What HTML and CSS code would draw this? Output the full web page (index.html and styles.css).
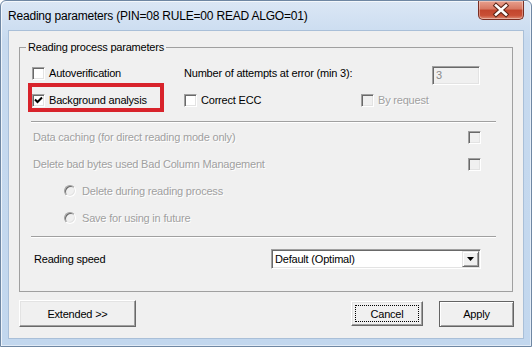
FILE: index.html
```html
<!DOCTYPE html>
<html>
<head>
<meta charset="utf-8">
<link rel="stylesheet" href="styles.css">
</head>
<body>
<div class="window">
  <div class="titlebar">
    <span class="title">Reading parameters (PIN=08 RULE=00 READ ALGO=01)</span>
    <span class="close">
      <svg width="44" height="18" viewBox="0 0 44 18">
        <path d="M17 4.5 L27 13.5 M27 4.5 L17 13.5" stroke="#5b2417" stroke-width="4.6" stroke-linecap="square" fill="none"/>
        <path d="M17 4.5 L27 13.5 M27 4.5 L17 13.5" stroke="#ffffff" stroke-width="2.6" stroke-linecap="square" fill="none"/>
      </svg>
    </span>
  </div>
  <div class="client">
    <fieldset class="group">
      <legend>Reading process parameters</legend>
      <div class="top">
        <label class="chk"><span class="box"></span><span>Autoverification</span></label>
        <div class="attempts"><span class="lbl">Number of attempts at error (min 3):</span><span class="num">3</span></div>
        <label class="chk hl"><span class="box"><svg width="9" height="9" viewBox="0 0 9 9"><path d="M1 3.5 L3.5 6 L8 1.5" stroke="#000" stroke-width="2" fill="none"/></svg></span><span>Background analysis</span></label>
        <label class="chk"><span class="box"></span><span>Correct ECC</span></label>
        <label class="chk dis"><span class="box"></span><span class="dtext">By request</span></label>
      </div>
      <div class="sep"></div>
      <div class="lower">
        <div class="row"><span class="dtext">Data caching (for direct reading mode only)</span><span class="box dbox"></span></div>
        <div class="row"><span class="dtext">Delete bad bytes used Bad Column Management</span><span class="box dbox"></span></div>
        <div class="row radio"><span class="rb"></span><span class="dtext">Delete during reading process</span></div>
        <div class="row radio"><span class="rb"></span><span class="dtext">Save for using in future</span></div>
      </div>
      <div class="sep sep2"></div>
      <div class="speed">
        <span>Reading speed</span>
        <div class="combo">
          <span class="val">Default (Optimal)</span>
          <span class="drop"><svg width="7" height="4" viewBox="0 0 7 4"><path d="M0 0 H7 L3.5 4 Z" fill="#000"/></svg></span>
        </div>
      </div>
    </fieldset>
    <div class="buttons">
      <button class="btn ext">Extended &gt;&gt;</button>
      <span class="spacer"></span>
      <button class="btn cancel"><span class="focus">Cancel</span></button>
      <button class="btn apply">Apply</button>
    </div>
  </div>
</div>
</body>
</html>
```
FILE: styles.css
```css
*, *::before, *::after { box-sizing: border-box; }
html, body { margin: 0; padding: 0; }
body {
  width: 532px;
  height: 347px;
  overflow: hidden;
  background: #ffffff;
  font-family: "Liberation Sans", Arial, sans-serif;
  font-size: 11px;
  letter-spacing: -0.2px;
  color: #000;
}
.window {
  width: 532px;
  height: 347px;
  display: flex;
  flex-direction: column;
  border: 1px solid #6f87a3;
  border-radius: 6px 6px 0 0;
  background: linear-gradient(#dbe7f5, #c7daef 40px, #c2d7ee);
  box-shadow: inset 1px 1px 0 rgba(255,255,255,.7), inset -1px -1px 0 rgba(255,255,255,.5);
  padding: 0 7px 7px 7px;
}
.titlebar {
  height: 29px;
  flex: none;
  display: flex;
  align-items: flex-start;
  justify-content: space-between;
}
.title {
  font-size: 12px;
  line-height: 30px;
  color: #000;
}
.close {
  width: 46px;
  height: 19px;
  display: flex;
  align-items: center;
  justify-content: center;
  border: 1px solid #7a2e22;
  border-top: none;
  border-radius: 0 0 5px 5px;
  background: linear-gradient(#e8a08e, #d77761 45%, #c2452d 50%, #c94f36 80%, #de8b74);
  box-shadow: inset 0 0 0 1px rgba(255,255,255,.35);
}
.close svg { display: block; }
.client {
  flex: 1;
  background: #f0f0f0;
  border: 1px solid #a9bfd8;
  padding: 10px 0 0 0;
  display: flex;
  flex-direction: column;
}
.group {
  margin: 0 10px;
  padding: 0 0 22px 0;
  border: 1px solid #a0a0a0;
  min-width: 0;
}
.group legend {
  margin-left: 6px;
  padding: 0 2px;
  font-size: 11px;
  line-height: 12px;
}
.top {
  display: grid;
  grid-template-columns: 152px 177px 119px;
  grid-template-rows: 20px 20px;
  row-gap: 7px;
  padding: 10px 0 0 12px;
}
.chk {
  display: flex;
  align-items: center;
  gap: 4px;
  white-space: nowrap;
}
.box {
  flex: none;
  width: 13px;
  height: 13px;
  background: #fff;
  border: 1px solid;
  border-color: #a0a0a0 #ffffff #ffffff #a0a0a0;
  box-shadow: inset 1px 1px 0 #696969, inset -1px -1px 0 #e3e3e3;
  display: flex;
  align-items: center;
  justify-content: center;
}
.box svg { display: block; }
.dis .box, .dbox { background: #f0f0f0; }
.hl { position: relative; }
.hl::after {
  content: "";
  position: absolute;
  left: -4px;
  top: -7px;
  width: 136px;
  height: 29px;
  border: 4px solid #d8232b;
}
.attempts {
  grid-column: 2 / 4;
  display: flex;
  justify-content: space-between;
  align-items: flex-start;
}
.attempts .lbl { line-height: 20px; }
.num {
  width: 48px;
  height: 19px;
  margin-top: 3px;
  background: #f0f0f0;
  border: 1px solid;
  border-color: #a0a0a0 #ffffff #ffffff #a0a0a0;
  box-shadow: inset 1px 1px 0 #696969, inset -1px -1px 0 #e3e3e3;
  color: #8a8a8a;
  padding-left: 3px;
  line-height: 17px;
}
.dtext {
  color: #a0a0a0;
  text-shadow: 1px 1px 0 #ffffff;
  white-space: nowrap;
}
.sep {
  height: 2px;
  margin: 11px 16px 0 11px;
  border-top: 1px solid #a0a0a0;
  border-bottom: 1px solid #ffffff;
}
.sep2 { margin-top: 8px; }
.lower {
  display: grid;
  grid-template-rows: 20px 20px 20px 20px;
  row-gap: 7px;
  padding: 4px 31px 0 13px;
}
.row {
  display: flex;
  align-items: center;
  justify-content: space-between;
}
.row.radio {
  justify-content: flex-start;
  padding-left: 31px;
  gap: 6px;
}
.rb {
  flex: none;
  width: 12px;
  height: 12px;
  border-radius: 50%;
  background: #f0f0f0;
  border: 1px solid;
  border-color: #a0a0a0 #ffffff #ffffff #a0a0a0;
  box-shadow: inset 1px 1px 0 #696969, inset -1px -1px 0 #e3e3e3;
}
.speed {
  margin-top: 11px;
  height: 20px;
  padding: 0 31px 0 14px;
  display: flex;
  align-items: center;
  justify-content: space-between;
}
.combo {
  width: 210px;
  height: 20px;
  background: #fff;
  border: 1px solid;
  border-color: #a0a0a0 #ffffff #ffffff #a0a0a0;
  box-shadow: inset 1px 1px 0 #696969, inset -1px -1px 0 #e3e3e3;
  display: flex;
  align-items: center;
  justify-content: space-between;
  padding: 1px 1px 1px 3px;
}
.drop {
  width: 17px;
  height: 16px;
  background: #f0f0f0;
  border: 1px solid;
  border-color: #e3e3e3 #696969 #696969 #e3e3e3;
  box-shadow: inset 1px 1px 0 #ffffff, inset -1px -1px 0 #a0a0a0;
  display: flex;
  align-items: center;
  justify-content: center;
}
.drop svg { display: block; }
.buttons {
  display: flex;
  align-items: flex-start;
  margin-top: 8px;
  padding: 0 9px 0 10px;
  gap: 16px;
}
.spacer { flex: 1; }
.btn {
  font-family: "Liberation Sans", Arial, sans-serif;
  font-size: 11px;
  letter-spacing: -0.2px;
  color: #000;
  background: #f0f0f0;
  border: 1px solid;
  border-color: #ffffff #696969 #696969 #ffffff;
  box-shadow: inset -1px -1px 0 #a0a0a0, inset 1px 1px 0 #e3e3e3;
  padding: 0;
  margin: 0;
  display: flex;
  align-items: center;
  justify-content: center;
}
.ext { width: 117px; height: 27px; }
.cancel { width: 72px; height: 25px; margin-top: 1px; padding: 3px; }
.focus {
  width: 100%;
  height: 100%;
  border: 1px dotted #000;
  display: flex;
  align-items: center;
  justify-content: center;
}
.apply {
  width: 75px;
  height: 26px;
  margin-top: 1px;
  border: 1px solid #646464;
  box-shadow: inset 1px 1px 0 #ffffff, inset -1px -1px 0 #a0a0a0;
}
```
